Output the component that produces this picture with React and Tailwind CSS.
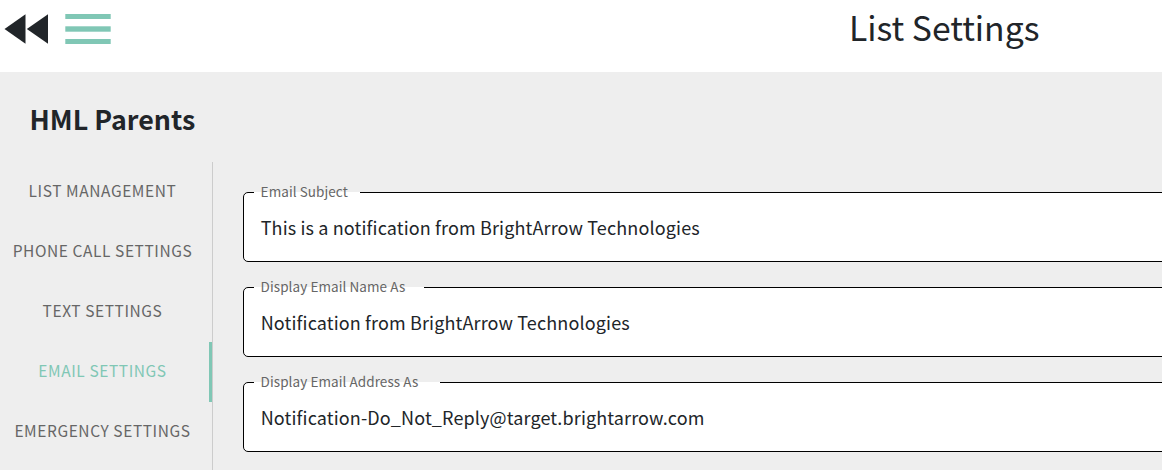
import React, { useState } from 'react';

const tabs = [
    'List Management',
    'Phone Call Settings',
    'Text Settings',
    'Email Settings',
    'Emergency Settings',
];

const fields = [
    { label: 'Email Subject', value: 'This is a notification from BrightArrow Technologies', notch: 'w-[106px]' },
    { label: 'Display Email Name As', value: 'Notification from BrightArrow Technologies', notch: 'w-[170px]' },
    { label: 'Display Email Address As', value: 'Notification-Do_Not_Reply@target.brightarrow.com', notch: 'w-[186px]' },
];

const Header = () => (
    <header className="flex h-[72px] items-start bg-white">
        <button aria-label="Back" className="mt-[14px] ml-1">
            <svg width="45" height="30" viewBox="0 0 45 30" fill="#212529">
                <path d="M0.5 15L21.5 0.3V29.7Z" />
                <path d="M22.8 15L44 0.3V29.7Z" />
            </svg>
        </button>
        <button aria-label="Menu" className="mt-[14px] ml-4">
            <svg width="46" height="30" viewBox="0 0 46 30" fill="#80c7b5">
                <rect x="0.3" width="45.4" height="5" />
                <rect x="0.3" y="12.3" width="45.4" height="5.4" />
                <rect x="0.3" y="25" width="45.4" height="5" />
            </svg>
        </button>
        <h1 className="mt-[3px] ml-[738px] text-[33.7px] leading-[48px] whitespace-nowrap">List Settings</h1>
    </header>
);

const TextField = ({ label, value, notch }) => (
    <div className="relative h-[70px] rounded-[5px] border border-black bg-white px-[17px]">
        {/* gap in the outline behind the floating label */}
        <div className={`absolute -top-px left-[10px] h-px bg-white ${notch}`} />
        <label className="absolute -top-[12px] left-[16.6px] text-[13.5px] leading-5 tracking-[0.08px] whitespace-nowrap text-[#666666]">{label}</label>
        <div className="-ml-[0.3px] text-[18px] leading-[68px] tracking-[0.135px] whitespace-nowrap">{value}</div>
    </div>
);

const App = () => {
    const [active, setActive] = useState('Email Settings');

    return (
        <div className="flex h-[470px] w-full flex-col overflow-hidden bg-[#eeeeee] font-['Noto_Sans_CJK_JP',sans-serif] text-[#212529]">
            <Header />
            <h2 className="h-[90px] shrink-0 pl-[29.5px] text-[26.8px] leading-[94px] font-bold">HML Parents</h2>
            <div className="flex flex-1">
                <nav className="flex w-[213px] shrink-0 flex-col border-r border-[#cccccc]">
                    {tabs.map(tab => (
                        <button
                            key={tab}
                            onClick={() => setActive(tab)}
                            className={`h-[60px] shrink-0 border-r-[3px] pr-1 pb-[2px] text-center text-[15.5px] tracking-[0.58px] whitespace-nowrap uppercase ${tab === active ? 'border-[#80c7b5] text-[#80c7b5]' : 'border-transparent text-[#666666]'}`}
                        >
                            {tab}
                        </button>
                    ))}
                </nav>
                <main className="-mr-5 flex flex-1 flex-col gap-[25px] pt-[30px] pl-[30px]">
                    {fields.map(f => <TextField key={f.label} {...f} />)}
                </main>
            </div>
        </div>
    );
};

export default App;
